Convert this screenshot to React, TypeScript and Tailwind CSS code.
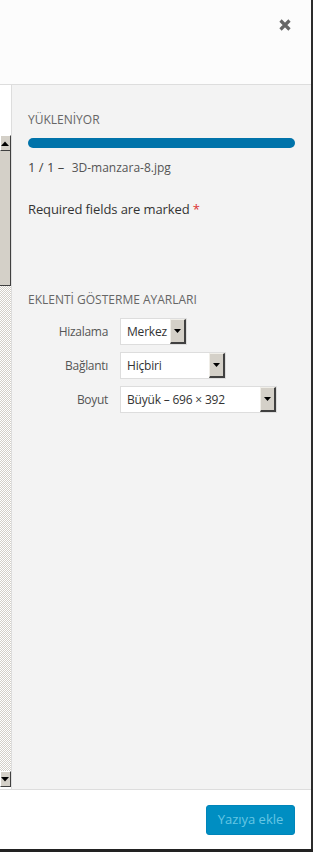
function ScrollButton({ down }: { down?: boolean }) {
  return (
    <div className="h-[16px] w-full bg-[#d4d0c8] border-t border-l border-t-white border-l-white border-b border-r border-b-[#404040] border-r-[#404040] flex items-center">
      <svg width="8" height="5" viewBox="0 0 8 5" className="block">
        {down ? <path d="M0 0h8L4 4.5z" fill="#000" /> : <path d="M0 5h8L4 0.5z" fill="#000" />}
      </svg>
    </div>
  )
}

function Select({ value, width }: { value: string; width: string }) {
  return (
    <div className={`${width} h-[27px] bg-white border border-[#ddd] flex items-center justify-between`}>
      <span className="pl-[6px] text-[12px] text-[#333] tracking-[-0.2px] whitespace-nowrap">{value}</span>
      <div className="h-[25px] w-[16px] shrink-0 bg-[#d4d0c8] border-t border-l border-t-[#f0eee8] border-l-[#f0eee8] border-b-2 border-r-2 border-b-[#404040] border-r-[#404040] flex items-center justify-center">
        <svg width="7" height="4" viewBox="0 0 7 4">
          <path d="M0 0h7L3.5 4z" fill="#000" />
        </svg>
      </div>
    </div>
  )
}

function Row({ label, value, width }: { label: string; value: string; width: string }) {
  return (
    <div className="flex items-center">
      <span className="w-[80px] text-right text-[12px] text-[#555] tracking-[-0.3px]">{label}</span>
      <span className="ml-[12px]">
        <Select value={value} width={width} />
      </span>
    </div>
  )
}

export default function App() {
  return (
    <div className="w-[313px] h-[852px] flex flex-col bg-[#222] font-['Open_Sans',sans-serif]">
      <div className="flex flex-1 min-h-0">
        <div className="flex-1 flex flex-col min-w-0">
          <div className="h-[85px] bg-[#fcfcfc] border-b border-[#ddd] flex justify-end">
            <button className="mt-[19px] mr-[20px] h-[12px] w-[12px]" aria-label="Kapat">
              <svg width="12" height="12" viewBox="0 0 12 12" className="block">
                <path d="M1.5 1.5L10.5 10.5M10.5 1.5L1.5 10.5" stroke="#666" strokeWidth="3.2" />
              </svg>
            </button>
          </div>

          <div className="flex-1 flex min-h-0">
            <div className="w-[12px] bg-white border-r border-[#ddd] flex flex-col">
              <div className="h-[50px]" />
              <ScrollButton />
              <div className="h-[135px] bg-[#d4d0c8] border-r border-b border-[#404040]" />
              <div className="flex-1 bg-[repeating-conic-gradient(#d4d0c8_0_25%,#fff_0_50%)] bg-[length:2px_2px]" />
              <ScrollButton down />
              <div className="h-[2px]" />
            </div>

            <div className="flex-1 bg-[#f3f3f3] px-4 pt-[27px]">
              <h2 className="text-[12px] uppercase text-[#666] leading-[16px]">Yükleni̇yor</h2>
              <div className="mt-[10px] h-[10px] rounded-full bg-[#0073aa]" />
              <p className="mt-[10px] text-[13px] text-[#444] leading-[18px]">
                1 / 1 – <span className="ml-[4px] text-[12px] text-[#555]">3D-manzara-8.jpg</span>
              </p>
              <p className="mt-[22px] text-[13px] text-[#333] leading-[20px] tracking-[-0.1px]">
                Required fields are marked <span className="text-[#dc3232]">*</span>
              </p>

              <h2 className="mt-[73px] text-[12px] uppercase text-[#666] leading-[16px]">Eklenti̇ Gösterme Ayarları</h2>
              <div className="mt-[10px] flex flex-col gap-[7px]">
                <Row label="Hizalama" value="Merkez" width="w-[67px]" />
                <Row label="Bağlantı" value="Hiçbiri" width="w-[106px]" />
                <Row label="Boyut" value="Büyük – 696 × 392" width="w-[157px]" />
              </div>
            </div>
          </div>

          <div className="h-[60px] bg-white border-t border-[#ddd] flex justify-end items-start">
            <button className="mt-[15px] mr-[16px] h-[30px] w-[89px] rounded-[3px] bg-[#008ec2] border border-[#0085ba] text-[13px] text-[#66c6e4]">
              Yazıya ekle
            </button>
          </div>
        </div>
        <div className="w-[2px] bg-[#2c2c2c]" />
      </div>
      <div className="h-[3px] bg-[#222]" />
    </div>
  )
}
